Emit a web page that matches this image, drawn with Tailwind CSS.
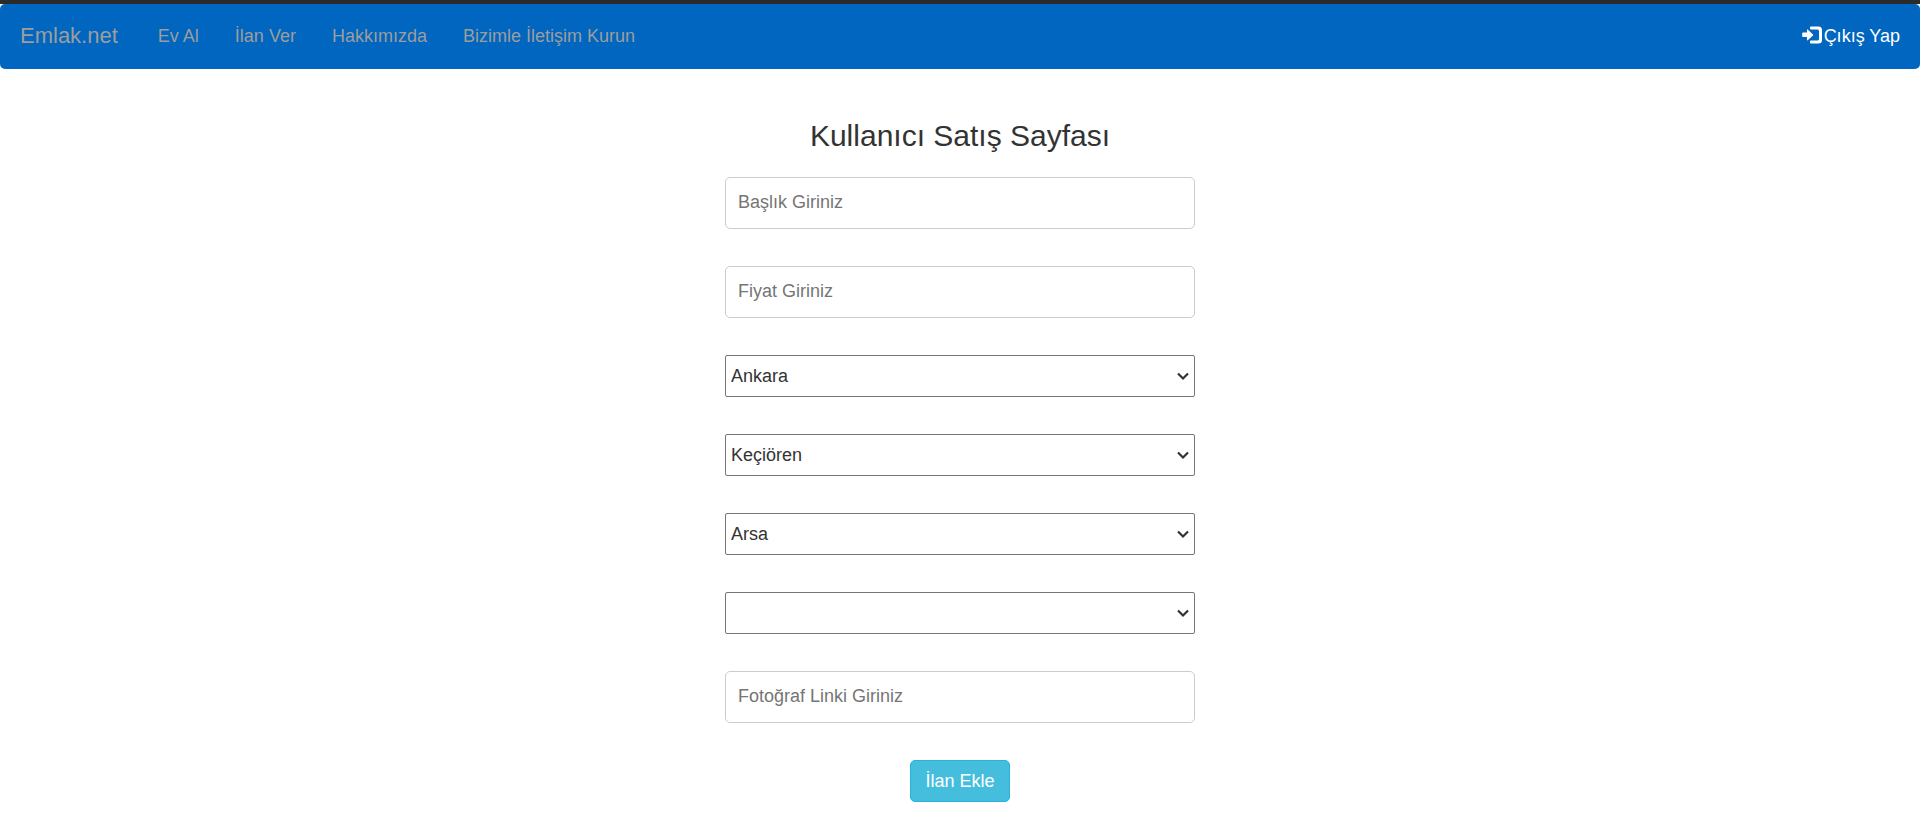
<!DOCTYPE html>
<html lang="tr">
<head>
<meta charset="utf-8">
<meta name="viewport" content="width=device-width, initial-scale=1">
<title>Emlak.net</title>
<script src="https://cdn.jsdelivr.net/npm/@tailwindcss/browser@4"></script>
</head>
<body class="min-h-screen border-t-4 border-[#2b2b2b] bg-white font-['Liberation_Sans',Arial,sans-serif] text-lg leading-6 text-[#333]">
<nav class="flex min-h-[65px] flex-wrap items-start justify-between rounded-[5px] bg-[#0066bf] px-5 pt-5 text-[#9d9d9d]">
  <div class="flex flex-wrap items-center gap-x-9">
    <a href="#" class="mr-1 text-[22px]">Emlak.net</a>
    <a href="#">Ev Al</a>
    <a href="#">İlan Ver</a>
    <a href="#">Hakkımızda</a>
    <a href="#">Bizimle İletişim Kurun</a>
  </div>
  <a href="#" class="flex items-center gap-0.5 text-white">
    <svg class="h-5 w-5" viewBox="0 0 20 20" fill="currentColor" aria-hidden="true"><path d="M1 6.500h4V3.800q0-.8.7-.2L11 8.500q.4.500 0 1L5.700 14.300q-.7.600-.7-.2V11H1q-.8 0-.8-.8V7.300Q.2 6.500 1 6.500z"/><path d="M8 2.500V1.500Q8 .5 9 .5h7.500Q20 .5 20 4v10q0 3.500-3.500 3.500H9q-1 0-1-1v-1q0-1 1-1h6.500q1.500 0 1.500-1.500V5q0-1.500-1.500-1.500H9q-1 0-1-1z"/></svg>
    Çıkış Yap
  </a>
</nav>
<main class="mx-auto flex w-full max-w-[470px] flex-col items-center pt-[50px]">
  <h1 class="mb-[25px] text-[30px] leading-[33px]">Kullanıcı Satış Sayfası</h1>
  <form class="flex w-full flex-col items-center gap-[37px]">
    <input type="text" aria-label="Başlık" placeholder="Başlık Giriniz" class="h-[52px] w-full rounded-[5px] border border-[#ccc] px-3 pb-0.5 placeholder:text-[#757575]">
    <input type="text" aria-label="Fiyat" placeholder="Fiyat Giriniz" class="h-[52px] w-full rounded-[5px] border border-[#ccc] px-3 pb-0.5 placeholder:text-[#757575]">
    <div class="relative w-full">
      <select aria-label="Şehir" class="block h-[42px] w-full appearance-none rounded-xs border border-[#767676] bg-white px-[5px]"><option>Ankara</option></select>
      <svg class="pointer-events-none absolute top-4 right-1.5 h-[10px] w-3" viewBox="0 0 12 10" fill="none" stroke="#333" stroke-width="2.200" aria-hidden="true"><path d="M1 2.500l5 5 5-5"/></svg>
    </div>
    <div class="relative w-full">
      <select aria-label="İlçe" class="block h-[42px] w-full appearance-none rounded-xs border border-[#767676] bg-white px-[5px]"><option>Keçiören</option></select>
      <svg class="pointer-events-none absolute top-4 right-1.5 h-[10px] w-3" viewBox="0 0 12 10" fill="none" stroke="#333" stroke-width="2.200" aria-hidden="true"><path d="M1 2.500l5 5 5-5"/></svg>
    </div>
    <div class="relative w-full">
      <select aria-label="Emlak türü" class="block h-[42px] w-full appearance-none rounded-xs border border-[#767676] bg-white px-[5px]"><option>Arsa</option></select>
      <svg class="pointer-events-none absolute top-4 right-1.5 h-[10px] w-3" viewBox="0 0 12 10" fill="none" stroke="#333" stroke-width="2.200" aria-hidden="true"><path d="M1 2.500l5 5 5-5"/></svg>
    </div>
    <div class="relative w-full">
      <select aria-label="Oda sayısı" class="block h-[42px] w-full appearance-none rounded-xs border border-[#767676] bg-white px-[5px]"><option></option></select>
      <svg class="pointer-events-none absolute top-4 right-1.5 h-[10px] w-3" viewBox="0 0 12 10" fill="none" stroke="#333" stroke-width="2.200" aria-hidden="true"><path d="M1 2.500l5 5 5-5"/></svg>
    </div>
    <input type="text" aria-label="Fotoğraf linki" placeholder="Fotoğraf Linki Giriniz" class="h-[52px] w-full rounded-[5px] border border-[#ccc] px-3 pb-0.5 placeholder:text-[#757575]">
    <button type="submit" class="h-[42px] rounded-[5px] border border-[#28b4d8] bg-[#44bedc] px-3.5 text-white">İlan Ekle</button>
  </form>
</main>
</body>
</html>
